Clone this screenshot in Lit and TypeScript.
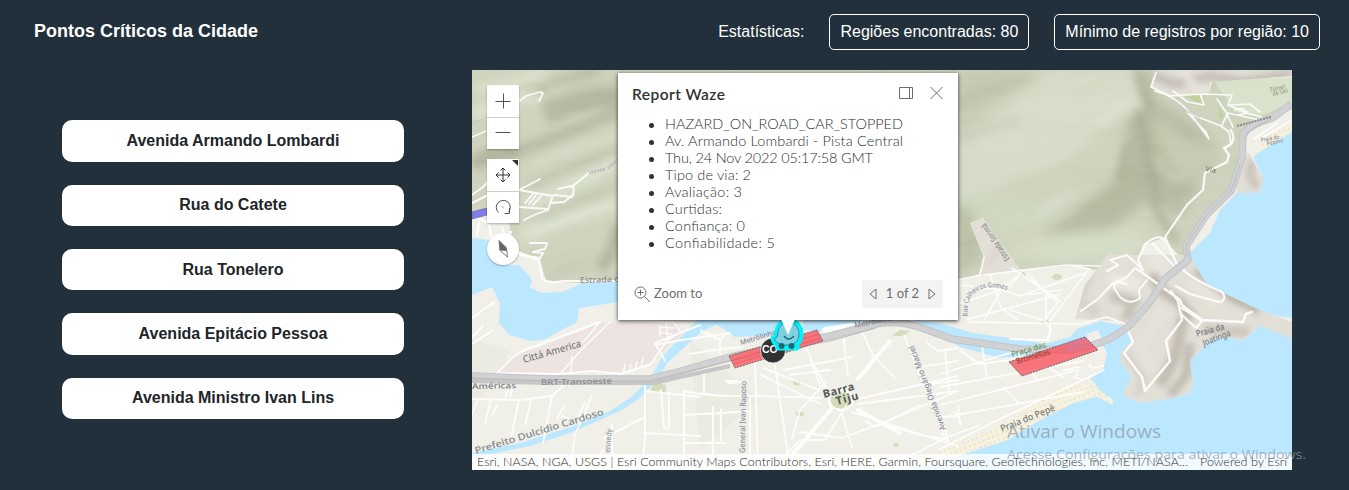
import { LitElement, html, css, svg } from "lit";
import { customElement } from "lit/decorators.js";

const STREETS = ["Avenida Armando Lombardi", "Rua do Catete", "Rua Tonelero", "Avenida Epitácio Pessoa", "Avenida Ministro Ivan Lins"];
const REPORT = ["HAZARD_ON_ROAD_CAR_STOPPED", "Av. Armando Lombardi - Pista Central", "Thu, 24 Nov 2022 05:17:58 GMT", "Tipo de via: 2", "Avaliação: 3", "Curtidas:", "Confiança: 0", "Confiabilidade: 5"];

// broad slopes of the hills: path, colour
const SLOPES: [string, string][] = [
  ["M958 70H1040L1000 100L958 130Z", "#bdc3ab"],
  ["M1050 70H1136L1142 105L1110 125L1060 165L958 200V150Z", "#d1d8c1"],
  ["M1143 98L1128 120L1120 175L1075 212L1040 236L1110 228L1150 200L1180 215L1200 185L1165 120Z", "#adb297"],
  ["M1150 125L1175 120L1225 160L1205 178L1180 182Z", "#bfc6aa"],
  ["M958 195L980 190L1030 205L1075 198L1050 225L1000 240Z", "#cbd3ba"],
  ["M958 205L970 210L984 255L958 275Z", "#b3b99f"],
  ["M1000 255L1040 236L1140 228L1150 244L1130 262L1060 262Z", "#d0d8c0"],
  ["M1135 70H1152L1155 98L1190 120L1222 150L1185 140L1150 112Z", "#b0b59c"],
];
// soft relief strokes: path, colour, width
const RELIEF: [string, string, number][] = [
  ["M472 88Q510 88 545 70", "#d6dcc5", 11],
  ["M520 102Q550 82 600 70", "#b2b69e", 11],
  ["M545 115Q580 96 620 96", "#acb199", 22],
  ["M545 90Q580 84 618 76", "#c5cbb3", 6],
  ["M472 115Q505 97 540 98", "#d8dfc7", 11],
  ["M472 165Q495 150 520 152", "#a8ad93", 15],
  ["M520 150Q560 138 620 110", "#b0b59d", 12],
  ["M535 165Q575 146 620 135", "#cfd6be", 10],
  ["M530 187Q565 166 620 150", "#b9bfa7", 8],
  ["M525 203Q570 190 618 160", "#d6dec6", 13],
  ["M540 217Q575 204 618 187", "#bcc2aa", 7],
  ["M520 237Q560 220 618 203", "#d8dfc8", 13],
  ["M546 279Q570 262 590 265", "#c0c6ae", 8],
  ["M600 270Q615 250 618 225", "#aaaf96", 12],
  ["M958 106Q985 88 1030 76", "#b2b8a1", 5],
  ["M960 137L1020 119", "#bac1a9", 4],
  ["M1138 106L1148 161L1160 205", "#9da289", 6],
  ["M1098 124L1125 103L1142 107", "#dbe2cd", 5],
  ["M1136 70L1150 110", "#9da289", 5],
  ["M1157 158L1163 170L1180 180", "#c9d0b7", 5],
  ["M1128 145L1119 182", "#a2a78e", 7],
  ["M1148 195L1177 242", "#a9ae94", 8],
  ["M1035 213L1060 200L1075 189", "#d7decb", 4],
];
const ROCK: [string, string, number][] = [
  ["M1150 74L1174 84L1210 76L1245 82L1292 73", "#c5bfb7", 9],
  ["M1180 70L1198 89L1217 94", "#e8e4db", 8],
  ["M1253 161Q1245 176 1258 187", "#c8c3b9", 8],
  ["M1090 273L1078 301L1099 314", "#d6d2c9", 10],
  ["M1110 296L1134 302L1125 320", "#c3bfb5", 10],
  ["M1110 280L1140 285", "#edebe4", 11],
  ["M1152 255L1165 275", "#e9e6df", 16],
  ["M1152 274L1161 290L1180 303L1193 318", "#bdb7ac", 10],
  ["M1195 272L1218 289L1258 311", "#b8b2a7", 9],
  ["M1190 280L1220 303", "#e9e5dd", 14],
  ["M1202 311L1228 315L1250 313", "#e4e0d7", 9],
  ["M1166 310L1140 345L1150 375", "#e6e2d9", 13],
  ["M1184 315L1174 360L1160 385", "#c2bcb1", 11],
  ["M1190 343L1186 376L1170 395", "#beb8ac", 8],
  ["M1124 350L1144 379L1137 395", "#d3cec4", 6],
  ["M1204 329L1225 331L1249 332", "#c8c2b7", 8],
  ["M1006 235L988 265", "#dbd7d0", 7],
];

// minor streets: path and width
const ROADS: [string, number][] = [
  ["M518 102L526 96L540 92L543 93L539 101", 1.8], ["M472 137L486 131", 1.5],
  ["M472 195L483 187L492 178M472 203L490 194L508 204", 2],
  ["M554 195L572 197L574 189L571 186L558 189M573 186L590 172M574 194L564 202L550 203L553 196L519 190L540 179M550 203L548 210L536 214L524 220M525 203L533 194M529 204L537 194M533 205L542 195M519 207L548 209", 1.8],
  ["M472 216L489 223L491 237M479 222L477 235M502 227L506 241L511 232M514 251L539 260L542 279Q550 284 563 281L618 281", 2.2],
  ["M530 243L547 243L545 249L533 252L543 253L540 258L520 255", 2],
  ["M472 318L494 302L493 305M472 344L492 331M472 337L483 326", 2],
  ["M496 374L514 356L525 350L600 322M500 373L560 374L592 371L621 374L651 364L667 340L681 332L673 322L618 320", 2],
  ["M610 322L584 347L560 374M599 323L583 342M572 356L571 374M625 365L623 374M631 364L629 373M637 362L635 370M643 359L641 368M660 327L660 336M666 322L668 337M659 327L674 328M662 333L672 334", 1.5],
  ["M472 399L520 400L552 396L565 384M552 396L543 443M478 400L471 416M491 400L485 423M497 405L492 416M504 400L512 382M515 382L510 396M519 400L511 437M531 401L525 425M578 417L585 402M592 395L575 435L571 462M557 418L564 407M562 416L569 419M603 450L597 462", 1.8],
  ["M645 384V438L642 466M661 390L664 426Q665 432 669 426V393M645 391L700 397M604 438L645 417M612 424V463M644 433L700 436M684 391V465M713 407V465M721 409V440M750 397V465M684 415L721 413L750 411M684 443H725", 2],
  ["M655 345L682 340L730 333M665 361L655 343L700 325M701 331L721 340L725 333M720 340V354M704 373V394M726 381H737M728 383L744 382", 2],
  ["M690 354L720 349L743 347M684 391Q710 397 757 396L820 398M755 360L758 465M761 375L820 404M763 368L834 396M775 366L789 462M806 346L812 362L829 393M811 360L820 385M784 370L852 357M790 375L830 370M843 334L848 376M862 332L873 355L894 377M825 383L800 410L792 439M846 406L825 440L800 440L773 468M800 432L842 438L890 420L958 391M852 412L938 440L958 446M858 404L958 391M858 399L958 376M842 414L852 447M904 335L945 438L978 426M927 343L938 351L958 348M919 367L958 361M925 385L958 380M866 421L875 427L920 405M884 424L920 435L945 439M887 465L920 451L946 438", 1.8],
  ["M958 280L980 275L984 257M984 275L1023 270L1066 265L1100 266M961 285L1001 290L1023 271M1001 290L985 319M1001 290L1020 296L1085 273M1010 287L1023 270L1058 303L1045 319M958 304L1001 290M968 319L1061 294M990 274L1001 308M1018 320L1001 308M1046 294V319M1066 265L1090 269M968 322L1080 324L1107 317L1130 326", 1.6],
  ["M1012 268L1060 301M1023 295L1061 290M1010 310L1045 321M1089 269L1050 321", 1.6],
  ["M960 350L979 364L1025 358M940 374L1020 350M940 387L1083 361M940 405L1078 370M940 418L1083 392M982 346L987 379M1004 388L1018 403M1018 348L1021 364M945 350L949 393M1032 372L1037 380M1045 365L1063 377M1063 371L1078 367Q1079 375 1074 377L1082 380M1090 364Q1088 370 1103 366M940 449L1002 418L1104 370M958 406L960 425M940 449L949 445L943 422M955 412L961 422", 1.8],
  ["M1046 322L1051 330L1048 340L1010 339M1050 326Q1050 333 1048 337", 2],
  ["M1156 73L1151 87L1170 96L1203 94L1232 95L1228 105L1246 113L1265 118M1155 91Q1176 96 1190 113L1209 139L1206 132L1188 113L1221 126L1229 132L1231 144M1173 91L1188 102L1204 105L1200 94M1217 99L1226 112L1233 127M1228 105L1250 104L1260 112M1235 110Q1242 106 1248 113L1238 115M1222 125L1228 113L1260 120M1254 139L1277 123M1260 139L1292 120", 1.7],
  ["M1231 130Q1238 143 1224 148L1229 155L1227 162L1205 173L1203 190L1187 205L1165 237L1178 267", 2.2],
  ["M1107 271L1118 265L1110 260L1127 255L1143 270L1138 260L1145 244Q1160 232 1165 241M1153 244L1178 270", 2],
  ["M1137 269L1180 300L1182 305L1202 320L1243 322L1246 314L1252 312M1171 291L1178 301L1182 320L1166 341L1170 361L1145 391L1142 377L1124 353L1133 342L1128 331", 2.5],
  ["M1181 314L1196 328L1202 321L1182 308M1182 269Q1195 281 1222 292Q1228 300 1219 302L1190 294L1176 286", 2.3],
  ["M1126 284Q1114 279 1114 288L1120 297Q1130 306 1140 298L1139 290L1147 280M1127 277L1112 284L1098 299L1081 311M1127 277L1135 268", 2],
];
// place names: text, x, y, rotation, size, colour, length
const PLACES: [string, number, number, number, number, string, number][] = [
  ["Cittá America", 524, 363, -16, 10, "#777b80", 60],
  ["BRT-Transoeste", 541, 385, -1, 8, "#898b8f", 71],
  ["Américas", 472, 389, -1, 8, "#767b80", 44],
  ["Prefeito Dulcídio Cardoso", 476, 454, -17, 9.5, "#81878c", 134],
  ["ennedy", 610, 453, -85, 8, "#9a9da6", 24],
  ["General Ivan Raposo", 745, 453, -89, 8, "#8c909d", 72],
  ["Metrôlinha", 741, 345, -17, 7, "#7d8193", 37],
  ["Metrôlinha", 855, 328, -12, 8, "#858992", 39],
  ["Avenida Olegário Maciel", 946, 429, -111, 8.5, "#8c909d", 90],
  ["Estrada de", 580, 283, -2, 8, "#878a86", 45],
  ["Estrada Sorimã", 1010, 259, -124, 8, "#8b8e8e", 44],
  ["Praça das", 1012, 357, -16, 8, "#6a9358", 36],
  ["Praia da", 1197, 337, -16, 9, "#777c81", 29],
  ["Joatinga", 1204, 346, -21, 9, "#777c81", 29],
  ["Praia do Pepê", 1002, 432, -22, 9.5, "#777a7b", 58],
  ["Via", 1205, 171, 10, 7, "#777d73", 11],
  ["Praia do", 1261, 142, -10, 6, "#8b8e91", 19],
  ["Pepino", 1267, 146, -14, 6, "#8b8e91", 17],
  ["Túnel", 1270, 92, -14, 6, "#96a08e", 16],
  ["de São", 1273, 96, -14, 6, "#96a08e", 16],
];
const HIGHWAY = "M472 376L550 379H650L674 373L730 357L830 336L876 324Q896 320 919 327L952 339L1020 349L1068 350Q1106 346 1130 325L1150 302L1165 279L1188 260L1186 246L1207 214L1231 191L1242 158L1243 134Q1250 124 1272 118L1292 104";

const map = svg`
<defs>
  <filter id="soft" x="-5%" y="-5%" width="110%" height="110%"><feGaussianBlur stdDeviation="4"/></filter>
  <filter id="broad" x="-5%" y="-5%" width="110%" height="110%"><feGaussianBlur stdDeviation="6"/></filter>
  <filter id="soft2" x="-5%" y="-5%" width="110%" height="110%"><feGaussianBlur stdDeviation="3"/></filter>
  <filter id="grain" x="0" y="0" width="100%" height="100%"><feTurbulence type="fractalNoise" baseFrequency=".014 .035" numOctaves="3" seed="8"/><feDiffuseLighting surfaceScale="6" diffuseConstant="1" lighting-color="#fff"><feDistantLight azimuth="230" elevation="52"/></feDiffuseLighting></filter>
  <pattern id="sand" width="5" height="5" patternUnits="userSpaceOnUse" patternTransform="rotate(-22)"><rect width="5" height="5" fill="#f6f2df"/><circle cx="2" cy="2" r=".7" fill="#cfcab5"/></pattern>
  <clipPath id="green"><path d="M472 70H1154L1151 87L1170 96L1210 92L1212 81L1245 79L1292 77V102L1262 119L1248 128L1242 164L1231 193L1205 219L1190 238L1184 261L1163 238L1143 245L1137 267L1110 260L1107 271L1066 266L1000 272L1018 267L983 218L970 223L984 257L980 275L958 280L618 282L578 283L546 281L540 260L514 249L508 217L472 212Z"/></clipPath>
  <clipPath id="rock"><path d="M1154 70H1292V76L1210 82V92L1170 96L1151 87ZM1248 152L1263 177L1260 193L1237 193L1235 168ZM1107 255H1190L1207 285L1253 307L1292 322V339L1260 325L1243 340L1223 337L1207 343L1190 360L1193 383L1190 393L1173 398L1140 403L1123 395L1132 377L1120 360L1122 350L1133 340L1118 321L1075 319L1085 285ZM970 223L983 218L1020 270L978 275L985 257Z"/></clipPath>
</defs>
<rect x="472" y="70" width="820" height="400" fill="#f0efe8"/>
<path d="M472 340L510 350L470 420ZM690 340L760 400L700 450Z" fill="#eae9df" opacity=".7"/>
<path d="M498 368L516 353L540 347L600 323L673 321L685 332L670 345L651 364L620 372L500 373Z" fill="#ede4e1"/>
<g fill="#bbe7ff">
  <path d="M472 238L489 240L505 265L519 265L530 277L532 282L529 287L542 293L562 292L585 282L618 282V302L579 308L577 322L545 339L532 341L509 335L499 323L500 303L492 287L472 295Z"/>
  <path d="M697 320H725L713 326L700 333L667 363L656 382L637 400L620 411L570 433L530 446L472 458V453L520 443L574 426L610 411L630 398L646 383L654 372L662 357Z"/>
  <path d="M706 320H783V334L760 336L735 337L721 327ZM803 320H888L850 324L819 331L803 330ZM913 320L940 323L973 333L1023 340L1045 344L1070 337L1077 329L1100 321L1120 325L1128 326L1133 341L1122 350L1120 360L1132 377L1123 395L1140 403L1173 398L1190 393L1193 383L1190 360L1207 343L1223 337L1243 340L1260 325L1292 339V470H900L958 456L1007 440L1040 420L1073 403L1097 397L1113 405V401L1100 391L1095 383L1090 379L1103 370L1107 353L1102 343L1080 350L1000 358L960 347Z"/>
  <path d="M1292 132L1267 147L1253 157L1263 177L1260 193L1237 193L1220 210L1210 233L1190 253L1193 267L1207 285L1253 307L1273 315L1292 318Z"/>
</g>
<path d="M1087 334L1098 330L1102 340L1104 352L1090 354Z" fill="#f2f0ea"/>
<path d="M1061 387L1090 384L1112 399V405L1098 396L1073 403L1040 420L1007 440L967 453L940 463L900 469L945 450L1010 421Z" fill="url(#sand)"/>
<path d="M1254 154L1268 136L1292 122V132L1267 147ZM1187 350L1200 338L1205 345L1192 358ZM1102 353L1106 348L1103 367L1099 370Z" fill="url(#sand)"/>
<g clip-path="url(#green)"><rect x="472" y="70" width="820" height="220" fill="#c8ceb6"/>
  <g filter="url(#broad)">${SLOPES.map(([d, c]) => svg`<path d=${d} fill=${c}/>`)}</g>
  <g filter="url(#soft)" fill="none">${RELIEF.map(([d, c, w]) => svg`<path d=${d} stroke=${c} stroke-width=${w}/>`)}</g>
  <rect x="472" y="70" width="820" height="220" filter="url(#grain)" opacity=".3" style="mix-blend-mode:soft-light"/>
  <path d="M1212 79L1292 75V103L1258 117L1236 112Z" fill="#dbe4cd" opacity=".85"/>
  <path d="M1173 91L1199 94L1204 104ZM1218 104L1224 118L1219 119Z" fill="#bdd29f"/>
</g>
<g clip-path="url(#rock)"><rect x="950" y="70" width="342" height="340" fill="#e2dfd7"/><g filter="url(#soft2)" fill="none">${ROCK.map(([d, c, w]) => svg`<path d=${d} stroke=${c} stroke-width=${w}/>`)}</g></g>
<g fill="#d4ddba"><path d="M650 392L654 382L666 385L666 394ZM829 396L850 391L852 408L834 411ZM892 336L900 330L910 331L903 336Z"/><ellipse cx="797" cy="383" rx="4" ry="2.5"/><ellipse cx="800" cy="414" rx="4" ry="2.5"/><ellipse cx="896" cy="445" rx="3" ry="2"/><ellipse cx="1023" cy="273" rx="4" ry="3"/><ellipse cx="1057" cy="277" rx="5" ry="3"/><ellipse cx="1045" cy="322" rx="4" ry="2"/></g>
<g fill="none" stroke="#fff" stroke-linejoin="round" stroke-linecap="round" opacity=".9">${ROADS.map(([d, w]) => svg`<path d=${d} stroke-width=${w}/>`)}
  <path d="M793 454L832 408M858 379L890 341M858 410L900 433" stroke-width="4"/><ellipse cx="841" cy="400" rx="12" ry="10" stroke-width="2.5"/><path d="M825 330L890 320" stroke-width="6"/></g>
<g fill="none" stroke-linejoin="round">
  <path d=${HIGHWAY} stroke="#c3c4c6" stroke-width="7.500"/>
  <path d=${HIGHWAY} stroke="#d0d1d3" stroke-width="5.500"/>
  <path d="M472 381L550 383H655L680 377L730 366" stroke="#c6c6c7" stroke-width="4"/>
  <path d="M472 378L550 381H650L674 375L730 361L830 341L876 328" stroke="#b8b8bb" stroke-width="1"/>
  <path d="M1187 256L1186 246L1207 214L1231 191L1240 165M1244 140Q1250 126 1272 119" stroke="#bcbec1" stroke-width="1"/>
  <path d="M605 169L589 173M618 159L607 169" stroke="#bebec5" stroke-width="3" stroke-dasharray="2 1"/>
  <path d="M472 123L482 120M1171 100L1184 110L1200 117" stroke="#c7cac9" stroke-width="2" stroke-dasharray="2 1"/>
  <path d="M1237 126L1271 117" stroke="#888c8c" stroke-width="2" stroke-dasharray="2 1"/>
</g>
<g class="place">${PLACES.map(([t, x, y, r, s, c, l]) => svg`<text transform="translate(${x} ${y}) rotate(${r})" font-size=${s} fill=${c} textLength=${l} lengthAdjust="spacingAndGlyphs">${t}</text>`)}
  <text transform="translate(824 398) rotate(-15)" font-size="11" font-weight="bold" fill="#55585a" textLength="32">Barra</text>
  <text transform="translate(837 405) rotate(-15)" font-size="11" font-weight="bold" fill="#55585a" textLength="23">Tiju</text>
  <path id="curve" d="M968 316C964 292 984 281 1009 291" fill="none"/><text font-size="7" fill="#8c909d"><textPath href="#curve" textLength="59" lengthAdjust="spacingAndGlyphs">Rua Calheiros Gomes</textPath></text>
</g>
<path d="M472 212L487 208V215L472 219Z" fill="#7d7de9" stroke="#6868a7" stroke-width=".7"/>
<g stroke="#66666c" stroke-width="1" stroke-dasharray="2 1"><path d="M729 356L817 330L823 341L735 368Z" fill="#f8656c" fill-opacity=".88"/><path d="M1009 362L1085 337L1098 350L1022 376Z" fill="#fa4e5a" fill-opacity=".76"/></g>
<path d="M1063 344L1085 338L1092 345Q1079 354 1053 352Q1077 350 1063 344" fill="#d97a92" opacity=".6"/>
<path d="M731 361L819 334M734 364L821 338" stroke="#dc555f" stroke-width="1" opacity=".6"/>
<text class="place" transform="translate(1017 364) rotate(-16)" font-size="8" fill="#a54331" textLength="35">Bromélias</text>
<circle cx="773" cy="350.500" r="12.500" fill="#303234" stroke="#fff" stroke-width=".7"/><text x="762" y="352.500" font-family="Liberation Sans" font-size="10.500" font-weight="bold" fill="#fff">CO</text>
<g fill="#80d0e3" stroke-linejoin="round">
  <path d="M774 339Q778 338 778 333C778 318 800 318 800 334Q800 341 796 343V347H779V344Q775 343 774 339Z" stroke="#00f4fa" stroke-width="7"/>
  <path d="M774 339Q778 338 778 333C778 319 799 319 799 334Q799 343 790 345H782Q776 343 774 339Z" stroke="#348fa2"/>
</g>
<circle cx="781.500" cy="346" r="3" fill="#176774"/><circle cx="791.500" cy="346" r="3" fill="#176774"/><path d="M784 336Q788.500 342 794 336" fill="none" stroke="#176774" stroke-width="1.300"/>`;

@customElement("app-root")
class AppRoot extends LitElement {
  static styles = css`
    :host { display: block; height: 490px; overflow: hidden; position: relative; background: #21303b; font-family: "Liberation Sans", Arial, sans-serif; color: #fff; }
    * { box-sizing: border-box; }
    header { height: 70px; padding: 14px 29px 0 34px; display: flex; justify-content: space-between; align-items: flex-start; }
    h1 { font-size: 18px; line-height: 34px; margin: 0; }
    .stats { display: flex; gap: 25px; font-size: 16px; line-height: 34px; white-space: nowrap; }
    .stats span { padding-top: 1px; }
    .box { height: 36px; border: 1px solid #fff; border-radius: 5px; padding: 0 10px; }
    main { display: grid; grid-template-columns: 342px 820px; column-gap: 68px; padding-left: 62px; align-items: start; }
    .list { display: grid; gap: 23px; padding-top: 50.200px; }
    .street { height: 41.400px; border: 0; border-radius: 10px; background: #fff; color: #212529; font: bold 16px/24px "Liberation Sans", Arial, sans-serif; padding: 0; }
    .map { position: relative; width: 820px; height: 400px; overflow: hidden; }
    .canvas { display: block; }
    .place { font-family: "Noto Sans", sans-serif; font-weight: 500; }
    .tools { position: absolute; left: 15px; top: 15px; width: 32px; display: grid; gap: 10px; }
    .group { display: grid; gap: 1px; background: #cfcfcf; box-shadow: 0 1px 2px rgba(0,0,0,.3); position: relative; }
    .tool { height: 32px; background: #fff; display: grid; place-items: center; padding-bottom: 1px; }
    .tool:last-of-type { height: 31px; }
    .tool svg, .compass svg { fill: none; stroke: #555; display: block; }
    .corner { position: absolute; right: 1px; top: 1px; border-top: 6px solid #323232; border-left: 6px solid transparent; }
    .compass { height: 32px; border-radius: 50%; background: #fff; display: grid; place-items: center; box-shadow: 0 1px 2px rgba(0,0,0,.3); }
    .popup { position: absolute; left: 146px; top: 3px; width: 340px; height: 247px; background: #fff; color: #323232; box-shadow: 0 1px 4px rgba(0,0,0,.8); font-family: Lato, sans-serif; padding: 11px 15px 12px 14px; display: flex; flex-direction: column; }
    .top { display: flex; align-items: center; height: 20px; justify-content: space-between; }
    h2 { margin: 0; font-size: 15.500px; line-height: 20px; font-weight: 600; color: #323232; letter-spacing: .45px; }
    .actions { display: flex; gap: 16px; padding-bottom: 3px; }
    .actions svg, .bottom svg { fill: none; stroke: #6e6e6e; display: block; }
    ul { margin: 12px 0 0; padding: 0 0 0 33px; font-size: 14.500px; line-height: 17px; font-weight: 300; color: #323232; }
    li { white-space: nowrap; height: 17px; }
    .fit { display: block; fill: #303030; overflow: visible; }
    .bottom { margin-top: auto; display: flex; justify-content: space-between; align-items: center; font-size: 13px; color: #6e6e6e; height: 28px; }
    .bottom span { position: relative; top: -1px; }
    .zoom { display: flex; gap: 3px; align-items: center; padding-left: 2px; }
    .pager { display: flex; align-items: center; justify-content: space-between; background: #f3f3f3; width: 81px; height: 28px; padding: 0 7px; }
    .pointer { position: absolute; left: 309px; top: 249px; border: 7px solid transparent; border-top: 16px solid #fff; border-bottom: 0; }
    .credits { position: absolute; left: 0; right: 0; bottom: 0; height: 16px; padding: 0 5px; display: flex; justify-content: space-between; background: rgba(255,255,255,.8); color: #323232; font: 300 12.500px/16px Lato, sans-serif; white-space: nowrap; }
    .mark { position: absolute; left: 1007px; top: 415px; width: 310px; height: 55px; fill: #8d999f; fill-opacity: .72; font-family: "Open Sans", sans-serif; }
  `;
  render() {
    return html`
      <header><h1>Pontos Críticos da Cidade</h1>
        <div class="stats"><span>Estatísticas:</span><div class="box">Regiões encontradas: 80</div><div class="box">Mínimo de registros por região: 10</div></div>
      </header>
      <main>
        <nav class="list">${STREETS.map((s) => html`<button class="street">${s}</button>`)}</nav>
        <section class="map">
          <svg class="canvas" width="820" height="400" viewBox="472 70 820 400">${map}</svg>
          <div class="tools">
            <div class="group"><div class="tool"><svg width="16" height="16"><path d="M.5 8.500H15.500M8.500 .5V15.500"/></svg></div><div class="tool"><svg width="16" height="16"><path d="M.5 7.500H15.500"/></svg></div></div>
            <div class="group"><div class="tool"><svg width="16" height="16"><path d="M1 8H15M8 1V15M3.500 5.500L1 8L3.500 10.500M12.500 5.500L15 8L12.500 10.500M5.500 3.500L8 1L10.500 3.500M5.500 12.500L8 15L10.500 12.500" stroke="#333"/></svg></div><div class="tool"><svg width="16" height="16"><path d="M3.500 13.500A7 7 0 1 1 13.500 13M14.500 9V14.500H9.500M7.500 8H8.500"/></svg></div><i class="corner"></i></div>
            <div class="compass"><svg width="16" height="20"><path d="M4 1.500L11.500 9L12.500 18L5 11.500Z" fill="#fff" stroke-width=".8"/><path d="M4 1.500L11.500 9V12L5 11.500Z" fill="#666" stroke="none"/></svg></div>
          </div>
          <div class="popup">
            <div class="top"><h2>Report Waze</h2><div class="actions"><svg width="15" height="14"><path d="M.5 1.500H13.500V12.500H.5ZM10.500 1.500V12.500"/></svg><svg width="13" height="14"><path d="M.5 1L12.500 13M12.500 1L.5 13"/></svg></div></div>
            <ul>${REPORT.map((r, i) => html`<li><svg class="fit" width="270" height="17"><text x="0" y="13" textLength=${[238, 238, 208, 86, 77, 57, 80, 110][i]}>${r}</text></svg></li>`)}</ul>
            <div class="bottom"><div class="zoom"><svg width="17" height="17"><circle cx="6.500" cy="6.500" r="5.500"/><path d="M10.500 10.500L16 16M3.500 6.500H9.500M6.500 3.500V9.500"/></svg><span>Zoom to</span></div>
            <div class="pager"><svg width="8" height="12"><path d="M7 1V11L1 6Z"/></svg><span>1 of 2</span><svg width="8" height="12"><path d="M1 1V11L7 6Z"/></svg></div></div>
          </div>
          <i class="pointer"></i>
          <div class="credits"><svg class="fit" width="712" height="16"><text x="0" y="12" textLength="711">Esri, NASA, NGA, USGS | Esri Community Maps Contributors, Esri, HERE, Garmin, Foursquare, GeoTechnologies, Inc, METI/NASA…</text></svg><svg class="fit" width="87" height="16"><text x="0" y="12" textLength="87">Powered by Esri</text></svg></div>
        </section>
      </main>
      <svg class="mark"><text x="0" y="23" font-size="19" textLength="154" lengthAdjust="spacingAndGlyphs">Ativar o Windows</text><text x="0" y="44" font-size="13.500" textLength="299" lengthAdjust="spacingAndGlyphs">Acesse Configurações para ativar o Windows.</text></svg>`;
  }
}
